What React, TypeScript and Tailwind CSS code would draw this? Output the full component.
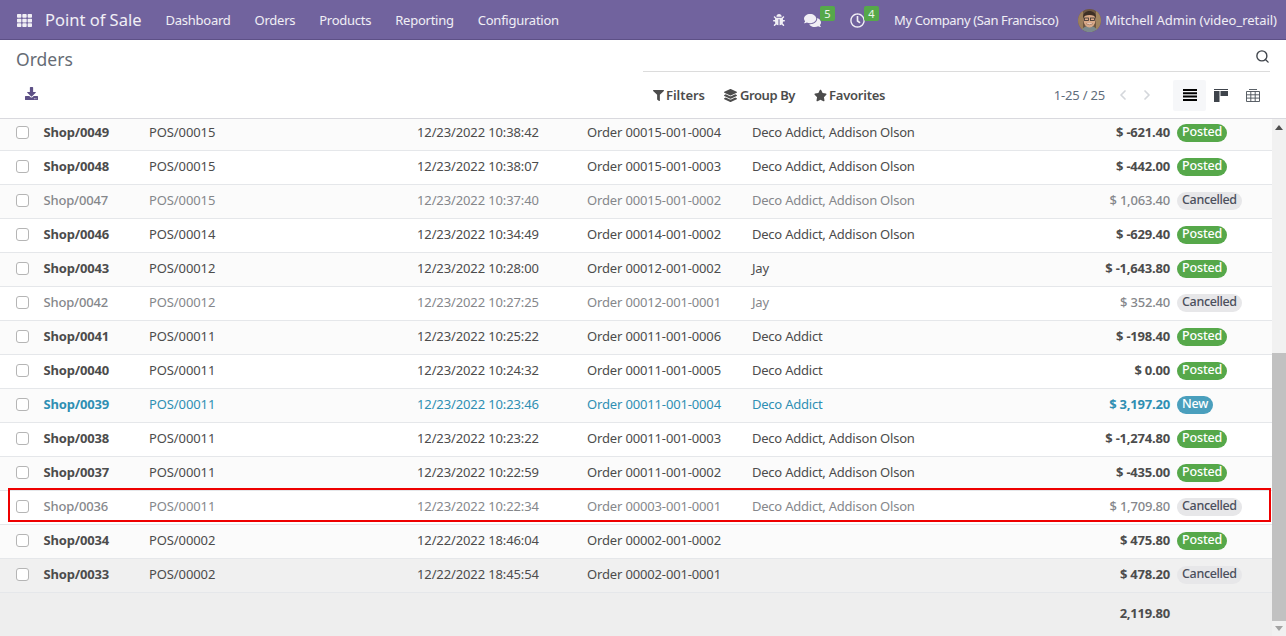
import React from "react";
import { FaBug, FaComments, FaDownload, FaFilter, FaLayerGroup, FaStar, FaTh, FaRegClock } from "react-icons/fa";
import { LuChevronLeft, LuChevronRight, LuSearch } from "react-icons/lu";

type Row = { n: string; s: string; d: string; o: string; c: string; a: string; st: "Posted" | "Cancelled" | "New" };

const rows: Row[] = [
  { n: "Shop/0049", s: "POS/00015", d: "12/23/2022 10:38:42", o: "Order 00015-001-0004", c: "Deco Addict, Addison Olson", a: "$ -621.40", st: "Posted" },
  { n: "Shop/0048", s: "POS/00015", d: "12/23/2022 10:38:07", o: "Order 00015-001-0003", c: "Deco Addict, Addison Olson", a: "$ -442.00", st: "Posted" },
  { n: "Shop/0047", s: "POS/00015", d: "12/23/2022 10:37:40", o: "Order 00015-001-0002", c: "Deco Addict, Addison Olson", a: "$ 1,063.40", st: "Cancelled" },
  { n: "Shop/0046", s: "POS/00014", d: "12/23/2022 10:34:49", o: "Order 00014-001-0002", c: "Deco Addict, Addison Olson", a: "$ -629.40", st: "Posted" },
  { n: "Shop/0043", s: "POS/00012", d: "12/23/2022 10:28:00", o: "Order 00012-001-0002", c: "Jay", a: "$ -1,643.80", st: "Posted" },
  { n: "Shop/0042", s: "POS/00012", d: "12/23/2022 10:27:25", o: "Order 00012-001-0001", c: "Jay", a: "$ 352.40", st: "Cancelled" },
  { n: "Shop/0041", s: "POS/00011", d: "12/23/2022 10:25:22", o: "Order 00011-001-0006", c: "Deco Addict", a: "$ -198.40", st: "Posted" },
  { n: "Shop/0040", s: "POS/00011", d: "12/23/2022 10:24:32", o: "Order 00011-001-0005", c: "Deco Addict", a: "$ 0.00", st: "Posted" },
  { n: "Shop/0039", s: "POS/00011", d: "12/23/2022 10:23:46", o: "Order 00011-001-0004", c: "Deco Addict", a: "$ 3,197.20", st: "New" },
  { n: "Shop/0038", s: "POS/00011", d: "12/23/2022 10:23:22", o: "Order 00011-001-0003", c: "Deco Addict, Addison Olson", a: "$ -1,274.80", st: "Posted" },
  { n: "Shop/0037", s: "POS/00011", d: "12/23/2022 10:22:59", o: "Order 00011-001-0002", c: "Deco Addict, Addison Olson", a: "$ -435.00", st: "Posted" },
  { n: "Shop/0036", s: "POS/00011", d: "12/23/2022 10:22:34", o: "Order 00003-001-0001", c: "Deco Addict, Addison Olson", a: "$ 1,709.80", st: "Cancelled" },
  { n: "Shop/0034", s: "POS/00002", d: "12/22/2022 18:46:04", o: "Order 00002-001-0002", c: "", a: "$ 475.80", st: "Posted" },
  { n: "Shop/0033", s: "POS/00002", d: "12/22/2022 18:45:54", o: "Order 00002-001-0001", c: "", a: "$ 478.20", st: "Cancelled" },
];

function Badge({ st }: { st: Row["st"] }) {
  const base = "flex h-[18px] items-center rounded-full px-[5px] pb-[1px] text-[12.5px] font-medium leading-none";
  if (st === "Posted") return <span className={`${base} tracking-[-0.15px] bg-[#56a84a] text-white`}>Posted</span>;
  if (st === "New") return <span className={`${base} tracking-[-0.15px] bg-[#4a9fbd] text-white`}>New</span>;
  return <span className={`${base} tracking-[-0.35px] bg-[#e7e7e9] text-[#4b4f5c]`}>Cancelled</span>;
}

function OrderRow({ r, i }: { r: Row; i: number }) {
  const muted = r.st === "Cancelled" && i !== 13;
  const blue = r.st === "New";
  const tone = blue ? "text-[#2f8fb3]" : muted ? "text-[#85878b]" : "text-[#4c4c4c]";
  const bold = blue ? "text-[#2f8fb3] font-bold" : muted ? "text-[#85878b] font-medium" : "text-[#4c4c4c] font-bold";
  const bg = i === 13 ? "bg-[#f0f0f0]" : i % 2 === 0 ? "bg-[#fbfbfb]" : "bg-white";
  const height = i === 0 ? "h-[32px] pb-[4px]" : "h-[34px] pb-[2px]";
  return (
    <div className={`relative flex shrink-0 items-center border-b border-[#e5e7ea] pl-[16px] text-[13px] ${bg} ${height} ${tone}`}>
      <span className="h-[13px] w-[13px] shrink-0 rounded-[3px] border border-[#b5b5b5] bg-white" />
      <span className={`ml-[14.5px] w-[105.5px] shrink-0 tracking-[-0.17px] ${bold}`}>{r.n}</span>
      <span className="w-[268px] shrink-0 tracking-[-0.1px]">{r.s}</span>
      <span className="w-[170px] shrink-0 tracking-[-0.12px]">{r.d}</span>
      <span className="w-[165px] shrink-0 tracking-[-0.15px]">{r.o}</span>
      <span className="w-[200px] shrink-0 tracking-[-0.23px]">{r.c}</span>
      <span className={`w-[218px] shrink-0 text-right tracking-[-0.2px] ${bold}`}>{r.a}</span>
      <span className="ml-[7px] flex"><Badge st={r.st} /></span>
      {i === 11 && <span className="pointer-events-none absolute left-[8px] right-[1px] top-[-3px] bottom-[2px] border-2 border-[#ee0000]" />}
    </div>
  );
}

function Avatar() {
  return (
    <svg width="23" height="23" viewBox="0 0 23 23" className="shrink-0">
      <defs><clipPath id="av"><circle cx="11.5" cy="11.5" r="11.5" /></clipPath></defs>
      <g clipPath="url(#av)">
        <rect width="23" height="23" fill="#6e5640" />
        <rect x="0" y="0" width="5" height="23" fill="#9c7f5c" />
        <rect x="18" y="0" width="5" height="23" fill="#a08560" />
        <path d="M3 23c1-5 5-6 8.500-6s7 1 8.500 6z" fill="#7c8a8c" />
        <ellipse cx="11.500" cy="11" rx="6" ry="7.500" fill="#d9a988" />
        <path d="M5 9c0-5 3-7 6.500-7S18 4 18 9c-1-2-3-3-6.500-3S6 7 5 9z" fill="#3d2f25" />
        <rect x="6.500" y="9" width="4" height="2.500" fill="none" stroke="#33302e" strokeWidth="0.800" />
        <rect x="12.500" y="9" width="4" height="2.500" fill="none" stroke="#33302e" strokeWidth="0.800" />
        <path d="M8 14.500c2 1.500 5 1.500 7 0" fill="#f3ece6" stroke="#8a5a48" strokeWidth="0.600" />
      </g>
    </svg>
  );
}

export default function App() {
  return (
    <div className="flex h-[636px] w-[1286px] flex-col overflow-hidden bg-white font-['Noto_Sans','Open_Sans',sans-serif] text-[13px]">
      <header className="flex h-[40px] shrink-0 items-center border-b border-[#5d5086] bg-[#71639e] pt-[1px] text-white/90">
        <FaTh className="ml-[17px] h-[15px] w-[15px] text-white/90" />
        <span className="ml-[13px] text-[16.500px]">Point of Sale</span>
        <nav className="ml-[24px] flex gap-[24px] pt-[1px] text-[13px] tracking-[-0.25px]">
          <span>Dashboard</span>
          <span>Orders</span>
          <span>Products</span>
          <span>Reporting</span>
          <span>Configuration</span>
        </nav>
        <div className="ml-auto flex items-center">
          <FaBug className="h-[12px] w-[12px]" />
          <span className="relative ml-[19px] flex">
            <FaComments className="h-[17px] w-[17px]" />
            <span className="absolute left-[16px] top-[-6px] flex h-[15px] w-[15px] items-center justify-center rounded-[2px] bg-[#56a84a] text-[11px] leading-none">5</span>
          </span>
          <span className="relative ml-[29px] flex">
            <FaRegClock className="h-[15px] w-[15px]" />
            <span className="absolute left-[14px] top-[-7px] flex h-[15px] w-[15px] items-center justify-center rounded-[2px] bg-[#56a84a] text-[11px] leading-none">4</span>
          </span>
          <span className="ml-[29px] pt-[1px] tracking-[-0.38px]">My Company (San Francisco)</span>
          <span className="ml-[20px] flex"><Avatar /></span>
          <span className="ml-[4px] mr-[9px] pt-[1px] tracking-[-0.03px]">Mitchell Admin (video_retail)</span>
        </div>
      </header>

      <section className="flex h-[79px] shrink-0 border-b border-[#d9d9de] bg-white">
        <div className="flex w-[643px] shrink-0 flex-col pl-[16px]">
          <div className="mt-[7px] h-[24px] text-[17.500px] leading-[24px] text-[#666c75]">Orders</div>
          <FaDownload className="ml-[9px] mt-[16px] h-[13px] w-[13px] text-[#5d5086]" />
        </div>
        <div className="flex w-[627px] shrink-0 flex-col">
          <div className="flex h-[32px] items-center justify-end border-b border-[#dcdcdc] pt-[2px]">
            <LuSearch className="h-[15px] w-[15px] text-[#3f444b]" strokeWidth={2.2} />
          </div>
          <div className="flex flex-1 items-center text-[#4c4c4c]">
            <span className="ml-[10px] flex items-center gap-[2px] pt-[1px] font-semibold tracking-[-0.05px]">
              <FaFilter className="h-[11px] w-[11px]" />Filters
            </span>
            <span className="ml-[19px] flex items-center gap-[3px] pt-[1px] font-semibold tracking-[-0.4px]">
              <FaLayerGroup className="h-[13px] w-[13px]" />Group By
            </span>
            <span className="ml-[19px] flex items-center gap-[2px] pt-[1px] font-semibold tracking-[-0.25px]">
              <FaStar className="h-[13px] w-[13px]" />Favorites
            </span>
            <span className="ml-auto pt-[1px] tracking-[-0.2px] text-[#5f6d7c]">1-25 / 25</span>
            <LuChevronLeft className="ml-[10px] h-[16px] w-[16px] text-[#d4d7db]" strokeWidth={2.6} />
            <LuChevronRight className="ml-[8px] h-[16px] w-[16px] text-[#d4d7db]" strokeWidth={2.6} />
            <span className="ml-[18px] flex h-[31px] w-[33px] items-center justify-center rounded-[2px] bg-[#f6f7f9]">
              <svg width="14" height="12" viewBox="0 0 14 12"><path d="M0 1h14M0 4.300h14M0 7.600h14M0 11h14" stroke="#000" strokeWidth="2" /></svg>
            </span>
            <span className="flex h-[31px] w-[30px] items-center justify-center">
              <svg width="14" height="13" viewBox="0 0 14 13"><path d="M0 0h14v1H0zM0 2h5.500v11H0zM6.500 2H14v5H6.500z" fill="#3f444b" /></svg>
            </span>
            <span className="flex h-[31px] w-[34px] items-center justify-center">
              <svg width="14" height="13" viewBox="0 0 14 13" fill="none" stroke="#4a5058" strokeWidth="0.900"><path d="M.5 2.500h13v10H.5zM.5 5.800h13M.5 9.100h13M4.800 2.500v10M9.200 2.500v10M3 .5h8" /></svg>
            </span>
          </div>
        </div>
      </section>

      <div className="flex min-h-0 flex-1">
        <main className="flex w-[1272px] shrink-0 flex-col bg-[#eeeeee]">
          {rows.map((r, i) => <OrderRow key={r.n} r={r} i={i} />)}
          <div className="flex h-[42px] items-center justify-end pr-[102px] text-[13px] font-bold tracking-[-0.2px] text-[#4c4c4c]">2,119.80</div>
        </main>
        <aside className="flex w-[14px] shrink-0 flex-col items-center bg-[#f1f1f1]">
          <svg width="8" height="5" viewBox="0 0 8 5" className="mt-[6px]"><path d="M4 0l4 5H0z" fill="#505050" /></svg>
          <div className="mt-[223px] h-[268px] w-full bg-[#c1c1c1]" />
          <svg width="8" height="5" viewBox="0 0 8 5" className="mt-[5px]"><path d="M4 5l4-5H0z" fill="#a3a3a3" /></svg>
        </aside>
      </div>
    </div>
  );
}
